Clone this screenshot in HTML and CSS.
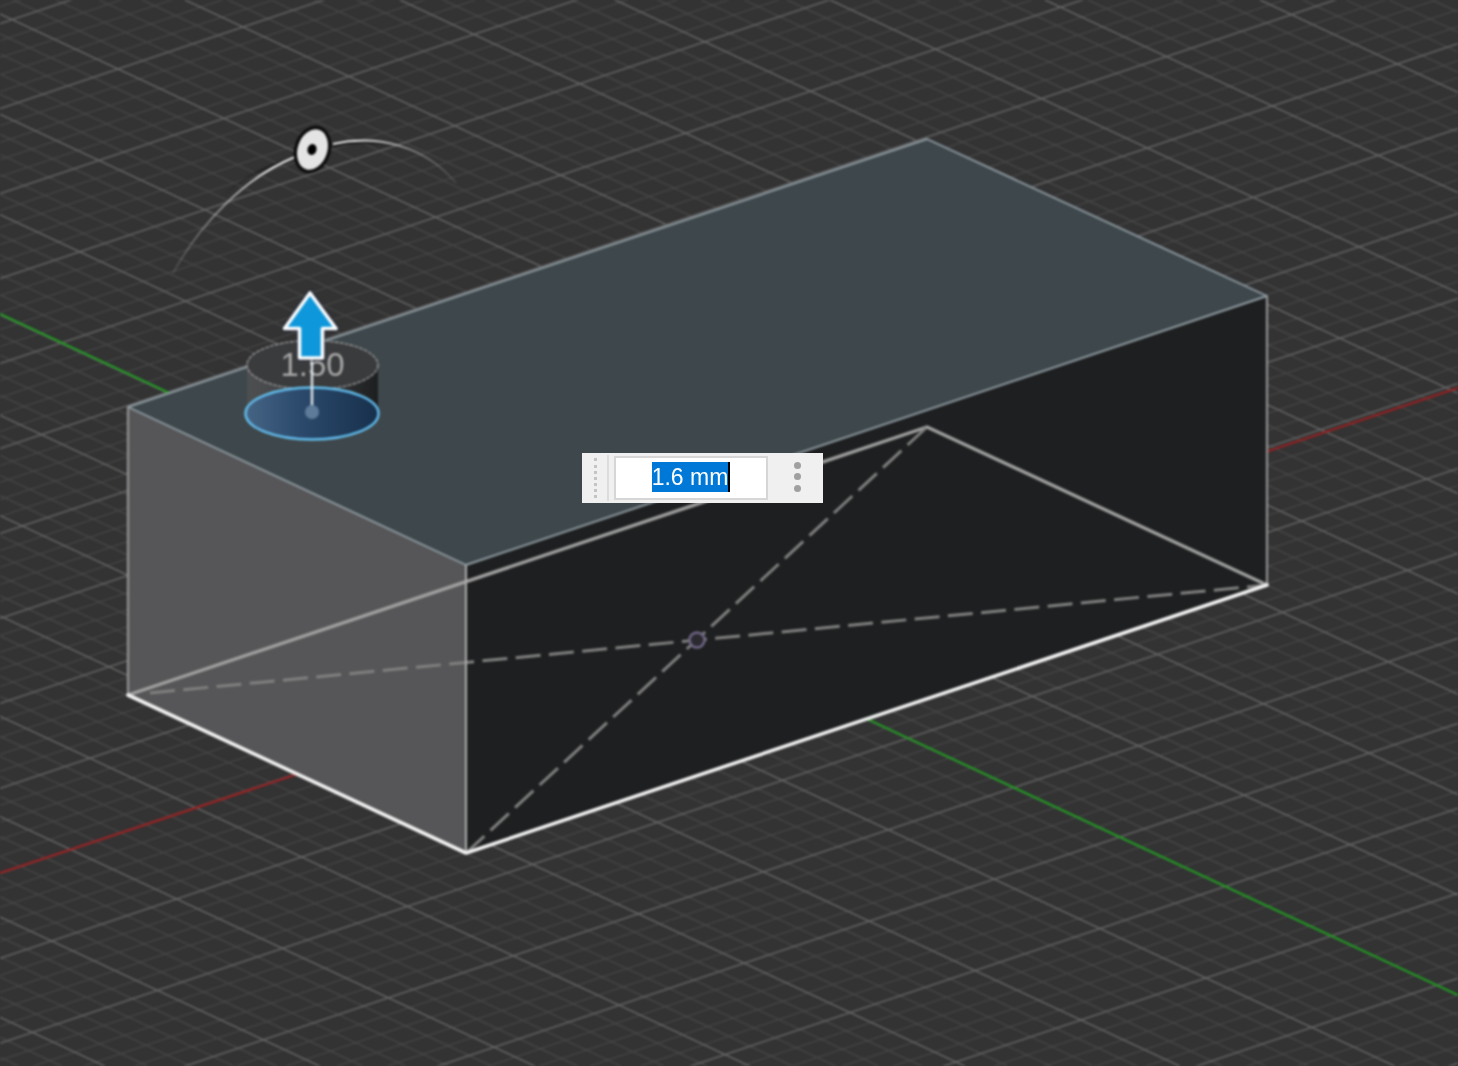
FILE: index.html
```html
<!DOCTYPE html>
<html lang="en">
<head>
<meta charset="utf-8">
<title>Thickness</title>
<link rel="stylesheet" href="styles.css">
</head>
<body>
<main class="viewport">
  <svg class="scene" width="1458" height="1066" viewBox="0 0 1458 1066" xmlns="http://www.w3.org/2000/svg">
    <defs>
      <pattern id="grid" width="100" height="100" patternUnits="userSpaceOnUse" patternTransform="matrix(1.0586 0.494 1.25 -0.42 2.57 65.3)">
        <g class="minor">
          <path d="M10 0V100M30 0V100M70 0V100M90 0V100"/>
          <path d="M0 10H100M0 30H100M0 70H100M0 90H100"/>
        </g>
        <g class="major">
          <path d="M50 0V100"/>
          <path d="M0 50H100"/>
        </g>
      </pattern>
      <linearGradient id="arcFade" gradientUnits="userSpaceOnUse" x1="172" y1="0" x2="455" y2="0">
        <stop offset="0" class="stop-a0"/>
        <stop offset="0.35" class="stop-a1"/>
        <stop offset="0.65" class="stop-a1"/>
        <stop offset="1" class="stop-a0"/>
      </linearGradient>
      <linearGradient id="shadowFade" gradientUnits="userSpaceOnUse" x1="220" y1="0" x2="400" y2="0">
        <stop offset="0" class="stop-s0"/>
        <stop offset="0.3" class="stop-s1"/>
        <stop offset="0.7" class="stop-s1"/>
        <stop offset="1" class="stop-s0"/>
      </linearGradient>
      <linearGradient id="discFill" x1="0" y1="0" x2="1" y2="0">
        <stop offset="0" class="stop-d0"/>
        <stop offset="0.4" class="stop-d1"/>
        <stop offset="1" class="stop-d2"/>
      </linearGradient>
      <linearGradient id="wallFill" x1="0" y1="0" x2="1" y2="0">
        <stop offset="0" class="stop-w0"/>
        <stop offset="0.5" class="stop-w1"/>
        <stop offset="1" class="stop-w2"/>
      </linearGradient>
    </defs>

    <rect class="floor" width="1458" height="1066"/>
    <line class="axis-red" x1="0" y1="873" x2="1458" y2="388"/>
    <line class="axis-green" x1="0" y1="314" x2="1458" y2="995"/>

    <polygon class="face-right" points="466,565 1267,296 1267,585 466,853"/>
    <polygon class="face-left" points="128,407 466,565 466,853 128,695"/>
    <polygon class="face-top" points="128,407 927,139 1267,296 466,565"/>

    <path class="edge-inner" d="M128 695L927 427L1267 585"/>
    <path class="edge-dash" d="M150 693L1267 585"/>
    <path class="edge-dash" d="M466 853L927 427"/>
    <circle class="center-dot" cx="697" cy="640" r="7.5"/>

    <path class="edge-top" d="M128 407L927 139L1267 296L466 565Z"/>
    <path class="edge-side" d="M128 407V695M1267 296V585"/>
    <path class="edge-front" d="M466 565V853"/>
    <path class="edge-bottom" d="M128 695L466 853L1267 585"/>

    <path class="arc-shadow" d="M220 198C240 180 265 166 295 158M333 146C355 141 378 142 400 150"/>
    <path class="arc" d="M173 273C200 224 245 177 295 157M333 144C378 134 425 146 456 183"/>
    <ellipse class="handle" cx="312.500" cy="149.500" rx="16.500" ry="22.500" transform="rotate(18 312.500 149.500)"/>
    <ellipse class="handle-eye" cx="312" cy="149.500" rx="4.500" ry="5.500" transform="rotate(18 312 149.500)"/>

    <path class="gizmo-wall" d="M247 365V413A65 25 0 0 0 378 413V365Z"/>
    <ellipse class="gizmo-top" cx="312.500" cy="365" rx="65.500" ry="24.500"/>
    <text class="gizmo-value" x="312.500" y="376" text-anchor="middle">1.50</text>
    <ellipse class="gizmo-disc" cx="312" cy="413.500" rx="66.500" ry="26"/>
    <path class="gizmo-stem" d="M312 362V408"/>
    <circle class="gizmo-pin" cx="312" cy="412" r="7"/>
    <path class="arrow" d="M310 293L336 328.500H322.500V358H299.500V328.500H284.500Z"/>
  </svg>

  <div class="entry">
    <span class="grip"></span>
    <span class="divider"></span>
    <div class="field"><span class="selected">1.6 mm</span></div>
    <div class="menu"><i class="dot"></i><i class="dot"></i><i class="dot"></i></div>
  </div>
</main>
</body>
</html>
```

FILE: styles.css
```css
html, body { margin: 0; padding: 0; background: #333334; }
.viewport { position: relative; width: 1458px; height: 1066px; overflow: hidden; }
.scene { display: block; filter: blur(0.8px); }

.floor { fill: url(#grid); }
.minor path { fill: none; stroke: #4a4a4a; stroke-width: 1.2; }
.major path { fill: none; stroke: #686868; stroke-width: 1.7; }
.axis-red { stroke: #a01f1f; stroke-width: 2; }
.axis-green { stroke: #1f9c1f; stroke-width: 2; }

.face-right { fill: #1e1f20; }
.face-left { fill: #565658; }
.face-top { fill: #3e474b; }

.edge-inner { fill: none; stroke: #a0a0a0; stroke-width: 3.4; stroke-linejoin: round; }
.edge-dash { fill: none; stroke: #808080; stroke-width: 3; stroke-dasharray: 25 8.4; }
.center-dot { fill: #2c2a31; stroke: #716888; stroke-width: 2.4; }
.edge-top { fill: none; stroke: #8f9ca3; stroke-width: 1.9; stroke-linejoin: round; }
.edge-side { fill: none; stroke: #929292; stroke-width: 2.2; }
.edge-front { fill: none; stroke: #acacac; stroke-width: 2; }
.edge-bottom { fill: none; stroke: #f2f2f2; stroke-width: 3.6; stroke-linejoin: round; stroke-linecap: round; }

.stop-a0 { stop-color: #c8c8c8; stop-opacity: 0.12; }
.stop-a1 { stop-color: #e6e6e6; stop-opacity: 1; }
.stop-s0 { stop-color: #111; stop-opacity: 0; }
.stop-s1 { stop-color: #111; stop-opacity: 0.7; }
.stop-d0 { stop-color: #466585; }
.stop-d1 { stop-color: #2c4a6c; }
.stop-d2 { stop-color: #17304c; }
.stop-w0 { stop-color: #4d4f51; }
.stop-w1 { stop-color: #3c3e40; }
.stop-w2 { stop-color: #1d1e20; }

.arc { fill: none; stroke: url(#arcFade); stroke-width: 2; }
.arc-shadow { fill: none; stroke: url(#shadowFade); stroke-width: 2.4; }
.handle { fill: #e4e4e4; stroke: #0c0c0c; stroke-width: 3.4; }
.handle-eye { fill: #000; }

.gizmo-wall { fill: url(#wallFill); }
.gizmo-top { fill: #3a3b3d; stroke: #959595; stroke-width: 1.4; stroke-dasharray: 4 1; }
.gizmo-value { font-family: "Liberation Sans", Arial, sans-serif; font-size: 33px; fill: #a8a8a8; }
.gizmo-disc { fill: url(#discFill); stroke: #62bcec; stroke-width: 2.4; }
.gizmo-stem { fill: none; stroke: #dfe4e9; stroke-width: 2.4; }
.gizmo-pin { fill: #5e7c99; }
.arrow { fill: #0e97da; stroke: #fafcfd; stroke-width: 3.6; stroke-linejoin: round; filter: drop-shadow(0 0 1.2px #071634); }

.entry {
  position: absolute; left: 582px; top: 453px;
  width: 241px; height: 50px;
  display: flex; align-items: center;
  background: #f0f0f0;
  filter: blur(0.6px);
}
.grip { margin-left: 12px; width: 0; height: 40px; border-left: 3px dotted #c4c4c4; }
.divider { margin-left: 10px; width: 2px; height: 46px; background: #dcdcdc; }
.field {
  margin-left: 5px; box-sizing: border-box;
  width: 154px; height: 44px;
  padding-top: 4px;
  display: flex; align-items: flex-start; justify-content: center;
  background: #fff; border: 2px solid #d6d6d6;
}
.selected {
  font-family: "Liberation Sans", Arial, sans-serif;
  font-size: 23px; line-height: 30px;
  color: #fff; background: #0078d7;
  border-right: 2px solid #000;
}
.menu { flex: 1; display: flex; flex-direction: column; align-items: center; gap: 4.5px; padding-left: 3px; margin-bottom: 3px; }
.dot { display: block; width: 7px; height: 7px; border-radius: 50%; background: #a0a0a0; }
```
